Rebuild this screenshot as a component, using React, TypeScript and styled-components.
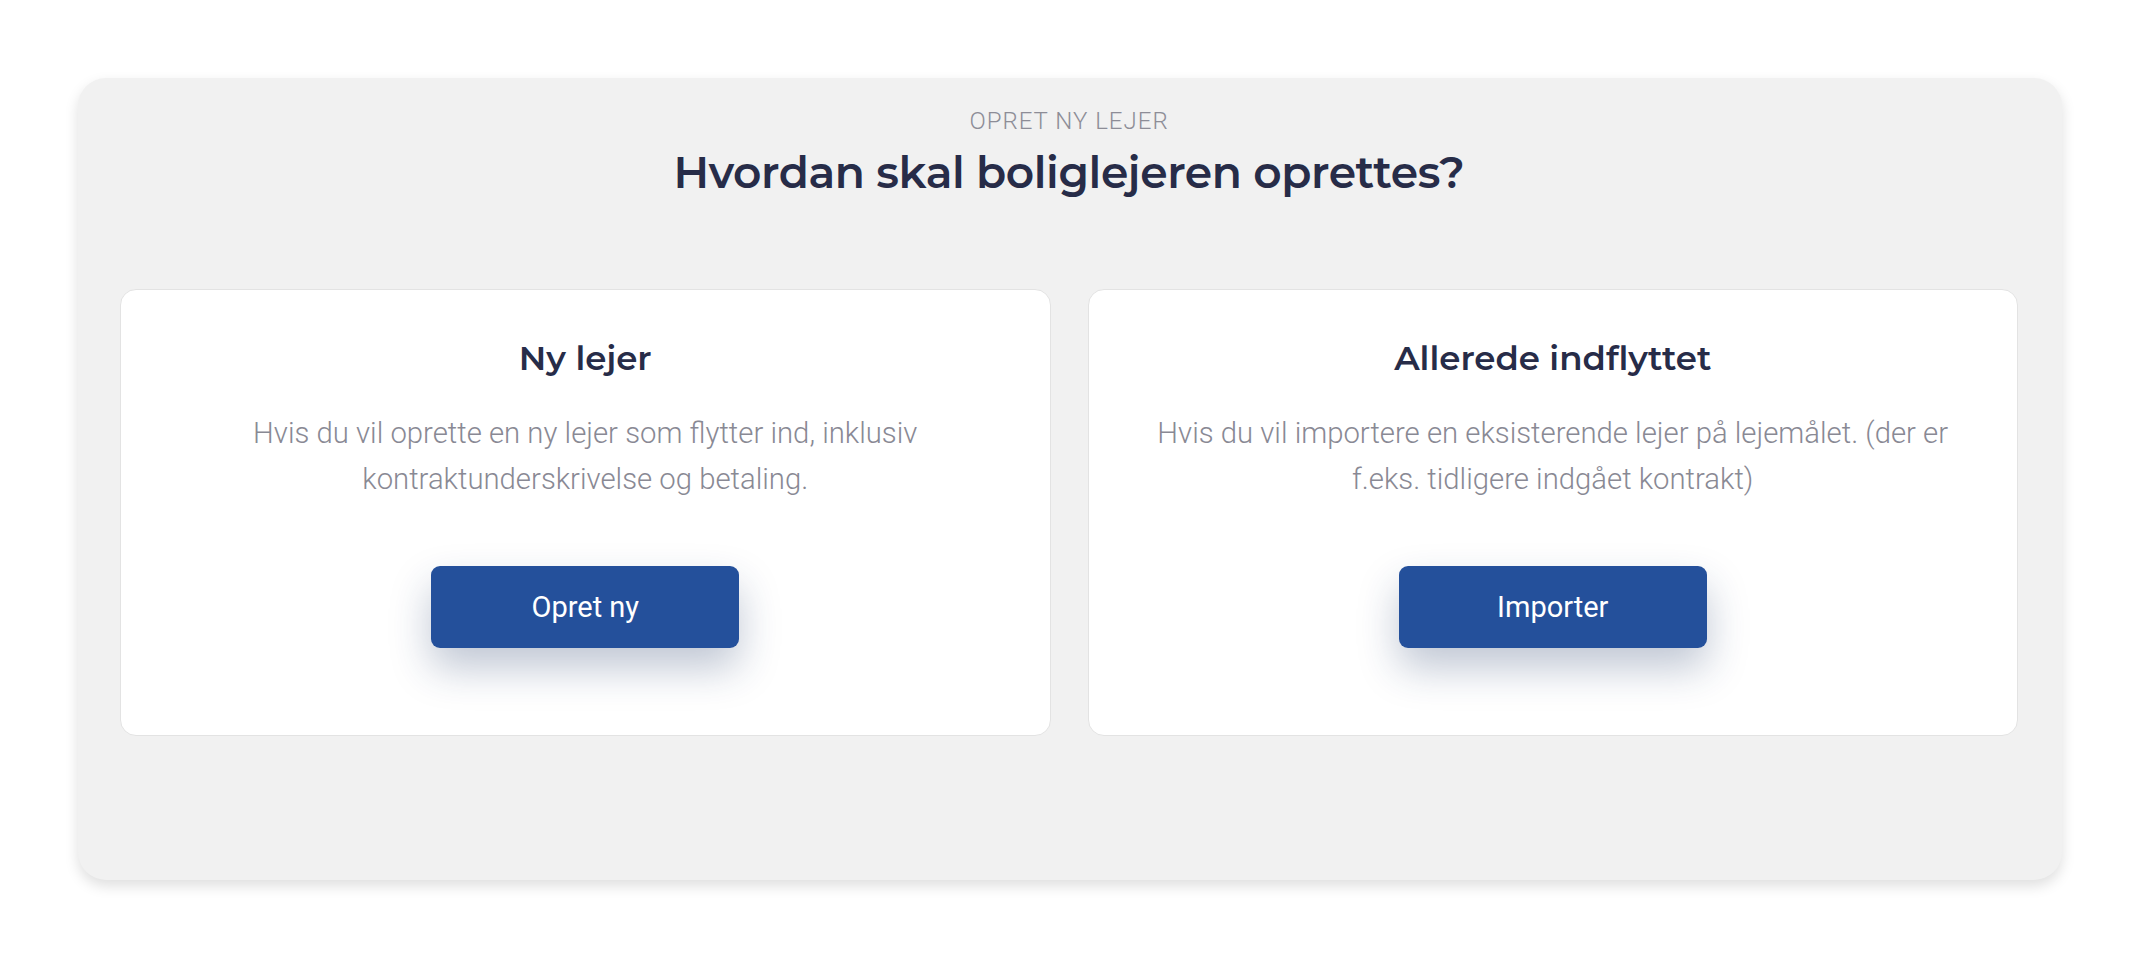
import React from "react";
import styled, {createGlobalStyle} from "styled-components";

const GlobalStyle = createGlobalStyle`
  html, body {
    margin: 0;
    padding: 0;
    background: #ffffff;
  }

  body {
    font-family: Roboto, "Liberation Sans", sans-serif;
  }

  * {
    box-sizing: border-box;
  }
`

const options = [
    {
        title: "Ny lejer",
        text: "Hvis du vil oprette en ny lejer som flytter ind, inklusiv kontraktunderskrivelse og betaling.",
        action: "Opret ny",
    },
    {
        title: "Allerede indflyttet",
        text: "Hvis du vil importere en eksisterende lejer på lejemålet. (der er f.eks. tidligere indgået kontrakt)",
        action: "Importer",
    },
]

export default function App(): JSX.Element {
    return (
        <Page>
            <GlobalStyle/>
            <Panel>
                <Eyebrow>OPRET NY LEJER</Eyebrow>
                <Heading>Hvordan skal boliglejeren oprettes?</Heading>
                <Choices>
                    {options.map(option => (
                        <ChoiceCard key={option.title}>
                            <ChoiceTitle>{option.title}</ChoiceTitle>
                            <ChoiceText>{option.text}</ChoiceText>
                            <PrimaryButton type="button">{option.action}</PrimaryButton>
                        </ChoiceCard>
                    ))}
                </Choices>
            </Panel>
        </Page>
    )
}

const Page = styled.div`
  padding: 78px;
  min-height: 958px;
`
const Panel = styled.section`
  background: #f1f1f1;
  border-radius: 28px;
  box-shadow: 0 6px 14px rgba(0, 0, 0, .13);
  padding: 29px 44px 144px 42px;
  display: flex;
  flex-direction: column;
  align-items: center;
`
const Eyebrow = styled.div`
  font-family: Roboto, "Liberation Sans", sans-serif;
  font-weight: 300;
  font-size: 24px;
  line-height: 29px;
  letter-spacing: 1px;
  color: #8d8d97;
`
const Heading = styled.h1`
  margin: 9px 0 0;
  font-family: Montserrat, Inter, "Liberation Sans", sans-serif;
  font-weight: 600;
  font-size: 44px;
  line-height: 54px;
  letter-spacing: -.4px;
  color: #272c48;
`
const Choices = styled.div`
  margin-top: 90px;
  width: 100%;
  display: grid;
  grid-template-columns: 1fr 1fr;
  gap: 37px;
`
const ChoiceCard = styled.div`
  background: #ffffff;
  border: 1px solid #e3e3e3;
  border-radius: 16px;
  padding: 48px 20px 87px;
  display: flex;
  flex-direction: column;
  align-items: center;
  text-align: center;
`
const ChoiceTitle = styled.h2`
  margin: 0;
  font-family: Montserrat, Inter, "Liberation Sans", sans-serif;
  font-weight: 600;
  font-size: 34px;
  line-height: 41px;
  color: #272c48;
`
const ChoiceText = styled.p`
  margin: 31px 0 0;
  max-width: 830px;
  font-family: Roboto, "Liberation Sans", sans-serif;
  font-weight: 300;
  font-size: 29.3px;
  line-height: 46px;
  color: #898994;
`
const PrimaryButton = styled.button`
  margin-top: 64px;
  width: 308px;
  height: 82px;
  border: none;
  border-radius: 9px;
  background: #24509b;
  color: #ffffff;
  font-family: Roboto, "Liberation Sans", sans-serif;
  font-weight: 400;
  font-size: 29px;
  cursor: pointer;
  box-shadow: 0 20px 40px rgba(30, 55, 100, .28);
`
